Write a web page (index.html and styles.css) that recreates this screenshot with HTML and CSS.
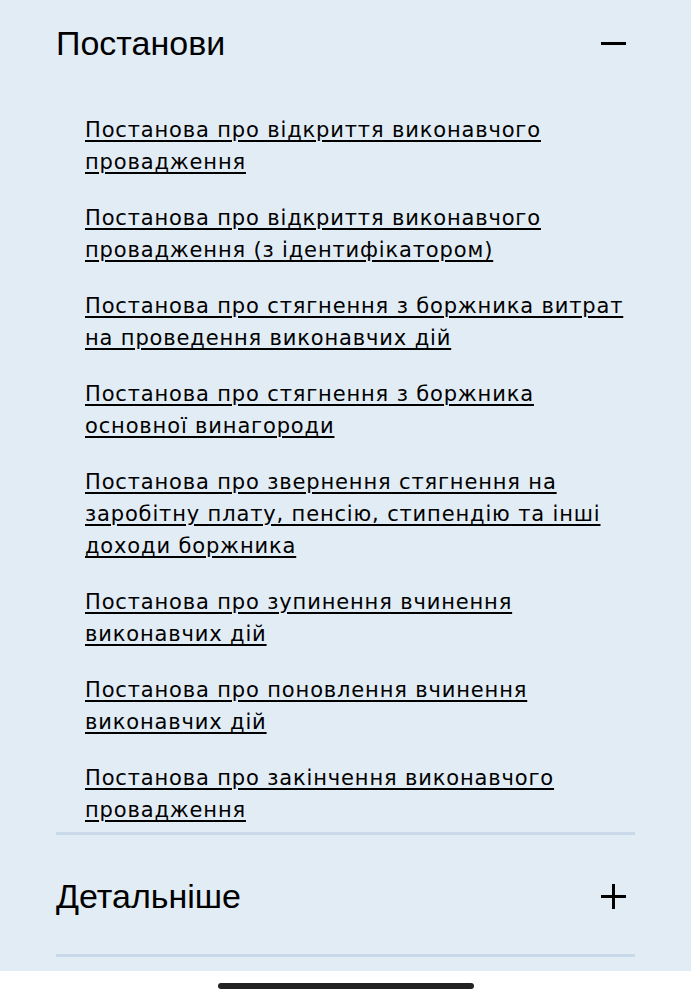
FILE: index.html
```html
<!DOCTYPE html>
<html lang="uk">
<head>
  <meta charset="UTF-8">
  <title>Постанови</title>
  <link rel="stylesheet" href="styles.css">
</head>
<body>

<div class="screen">
  <main class="page">
    <!-- Розгорнутий блок зі списком постанов -->
    <section class="acc-item acc-open">
      <div class="acc-head">
        <h2 class="acc-title">Постанови</h2>
        <svg class="acc-icon" width="25" height="25" viewBox="0 0 25 25">
          <line x1="0" y1="12.5" x2="25" y2="12.5" stroke="#000" stroke-width="3"/>
        </svg>
      </div>
      <ul class="acc-list">
        <li><a href="#">Постанова про відкриття виконавчого провадження</a></li>
        <li><a href="#">Постанова про відкриття виконавчого провадження (з ідентифікатором)</a></li>
        <li><a href="#">Постанова про стягнення з боржника витрат на проведення виконавчих дій</a></li>
        <li><a href="#">Постанова про стягнення з боржника основної винагороди</a></li>
        <li><a href="#">Постанова про звернення стягнення на заробітну плату, пенсію, стипендію та інші доходи боржника</a></li>
        <li><a href="#">Постанова про зупинення вчинення виконавчих дій</a></li>
        <li><a href="#">Постанова про поновлення вчинення виконавчих дій</a></li>
        <li><a href="#">Постанова про закінчення виконавчого провадження</a></li>
      </ul>
    </section>

    <!-- Згорнутий блок -->
    <section class="acc-item">
      <div class="acc-head">
        <h2 class="acc-title">Детальніше</h2>
        <svg class="acc-icon" width="25" height="25" viewBox="0 0 25 25">
          <line x1="0" y1="12.5" x2="25" y2="12.5" stroke="#000" stroke-width="3"/>
          <line x1="12.5" y1="0" x2="12.5" y2="25" stroke="#000" stroke-width="3"/>
        </svg>
      </div>
    </section>
  </main>

  <!-- Нижня системна смужка -->
  <div class="home-bar">
    <div class="home-indicator"></div>
  </div>
</div>

</body>
</html>
```

FILE: styles.css
```css
* {
  margin: 0;
  padding: 0;
  box-sizing: border-box;
}
html, body {
  width: 100%;
  height: 100%;
  background: #e2ecf5;
}

.screen {
  height: 1000px;
  display: flex;
  flex-direction: column;
}

.page {
  flex: 1;
  padding: 23px 56px 0 56px;
}

/* Акордеон */
.acc-item {
  border-bottom: 3px solid #c9d9ea;
}
.acc-head {
  display: flex;
  align-items: center;
  justify-content: space-between;
  height: 40px;
  box-sizing: content-box;
  padding-right: 9px;
}
.acc-item + .acc-item .acc-head {
  padding-top: 41px;
  padding-bottom: 38px;
}
.acc-title {
  font-family: "Liberation Sans", Arial, sans-serif;
  font-weight: normal;
  font-size: 34px;
  line-height: 40px;
  color: #000;
}
.acc-icon {
  display: block;
  flex-shrink: 0;
}

.acc-list {
  list-style: none;
  padding: 51px 0 6px 29px;
  display: flex;
  flex-direction: column;
  gap: 24px;
}
.acc-list a {
  font-family: "DejaVu Sans", sans-serif;
  font-size: 21px;
  letter-spacing: 0.85px;
  line-height: 32px;
  color: #000;
  text-decoration: underline;
  text-decoration-thickness: 1.5px;
  text-underline-offset: 3px;
}

/* Нижня смужка з індикатором */
.home-bar {
  height: 29px;
  background: #fff;
  display: flex;
  justify-content: center;
  padding-top: 12px;
}
.home-indicator {
  width: 256px;
  height: 6px;
  border-radius: 3px;
  background: #222;
}
```
